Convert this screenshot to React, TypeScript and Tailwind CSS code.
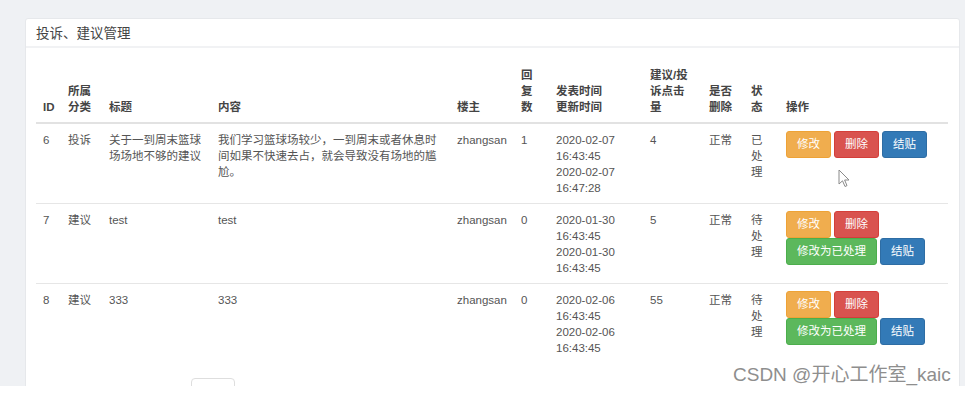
import React from 'react';

type Row = {
  id: string;
  type: string;
  title: string;
  content: string;
  owner: string;
  replies: string;
  dates: string[];
  clicks: string;
  deleted: string;
  status: string;
  done: boolean;
};

const rows: Row[] = [
  {
    id: '6',
    type: '投诉',
    title: '关于一到周末篮球场场地不够的建议',
    content: '我们学习篮球场较少，一到周末或者休息时间如果不快速去占，就会导致没有场地的尴尬。',
    owner: 'zhangsan',
    replies: '1',
    dates: ['2020-02-07', '16:43:45', '2020-02-07', '16:47:28'],
    clicks: '4',
    deleted: '正常',
    status: '已处理',
    done: true,
  },
  {
    id: '7',
    type: '建议',
    title: 'test',
    content: 'test',
    owner: 'zhangsan',
    replies: '0',
    dates: ['2020-01-30', '16:43:45', '2020-01-30', '16:43:45'],
    clicks: '5',
    deleted: '正常',
    status: '待处理',
    done: false,
  },
  {
    id: '8',
    type: '建议',
    title: '333',
    content: '333',
    owner: 'zhangsan',
    replies: '0',
    dates: ['2020-02-06', '16:43:45', '2020-02-06', '16:43:45'],
    clicks: '55',
    deleted: '正常',
    status: '待处理',
    done: false,
  },
];

const colWidths = [25, 41, 109, 239, 64, 35, 94, 59, 42, 35, 169];

function Btn({ color, children }: { color: 'orange' | 'red' | 'blue' | 'green'; children: React.ReactNode }) {
  const styles = {
    orange: 'bg-[#f0ad4e] border-[#eea236]',
    red: 'bg-[#d9534f] border-[#d43f3a]',
    blue: 'bg-[#337ab7] border-[#2e6da4]',
    green: 'bg-[#5cb85c] border-[#4cae4c]',
  };
  return (
    <span
      className={`inline-flex h-[27px] items-center justify-center rounded-[3px] border px-[10px] text-[11.5px] leading-none text-white ${styles[color]}`}
    >
      {children}
    </span>
  );
}

function Cursor() {
  return (
    <svg className="absolute left-[838px] top-[169px]" width="12" height="19" viewBox="0 0 12 19">
      <path
        d="M1 1 L1 15 L4.5 11.8 L7 17.5 L9 16.6 L6.6 11 L11 11 Z"
        fill="#fff"
        stroke="#8a8a8a"
        strokeWidth="1"
        strokeLinejoin="round"
      />
    </svg>
  );
}

export default function App() {
  const th = 'px-[7px] pt-[8px] pb-[7px] align-bottom text-left font-bold text-[#444] border-b-2 border-[#e2e2e2]';
  const td = 'px-[7px] pt-[8px] pb-[7px] align-top';

  return (
    <div
      className="relative h-[394px] w-[965px] overflow-hidden bg-white"
      style={{ fontFamily: '"Liberation Sans", "Noto Sans CJK SC", sans-serif' }}
    >
      <div className="h-[386px] overflow-hidden bg-[#eff1f4] pl-[25px] pr-[5px] pt-[18px]">
        <div className="h-[400px] rounded-[3px] border border-[#e6e8eb] bg-white">
          {/* panel heading */}
          <div className="flex h-[29px] items-center border-b-2 border-[#f1f2f4] px-[10px] pt-[3px] text-[13.5px] text-[#444]">
            投诉、建议管理
          </div>

          <div className="px-[10px] pt-[11px]">
            <table className="w-[912px] table-fixed border-collapse text-[11.5px] leading-[16px] text-[#555]">
              <colgroup>
                {colWidths.map((w, i) => (
                  <col key={i} style={{ width: w }} />
                ))}
              </colgroup>
              <thead>
                <tr>
                  <th className={th}>ID</th>
                  <th className={th}>所属分类</th>
                  <th className={th}>标题</th>
                  <th className={th}>内容</th>
                  <th className={th}>楼主</th>
                  <th className={th}>回复数</th>
                  <th className={th}>
                    发表时间
                    <br />
                    更新时间
                  </th>
                  <th className={th}>建议/投诉点击量</th>
                  <th className={th}>是否删除</th>
                  <th className={th}>状态</th>
                  <th className={th}>操作</th>
                </tr>
              </thead>
              <tbody>
                {rows.map((r, i) => (
                  <tr key={r.id} className={i > 0 ? 'border-t border-[#e6e6e6]' : ''}>
                    <td className={td}>{r.id}</td>
                    <td className={td}>{r.type}</td>
                    <td className={td}>{r.title}</td>
                    <td className={td}>{r.content}</td>
                    <td className={`${td} whitespace-nowrap`}>{r.owner}</td>
                    <td className={td}>{r.replies}</td>
                    <td className={td}>
                      {r.dates.map((d, j) => (
                        <div key={j}>{d}</div>
                      ))}
                    </td>
                    <td className={td}>{r.clicks}</td>
                    <td className={td}>{r.deleted}</td>
                    <td className={td}>{r.status}</td>
                    <td className={`${td} !pt-[7px]`}>
                      <div className="flex flex-wrap gap-x-[3px]">
                        <Btn color="orange">修改</Btn>
                        <Btn color="red">删除</Btn>
                        {!r.done && <Btn color="green">修改为已处理</Btn>}
                        <Btn color="blue">结贴</Btn>
                      </div>
                    </td>
                  </tr>
                ))}
              </tbody>
            </table>

            {/* pagination (cut off) */}
            <div className="ml-[155px] mt-[15px] flex h-[30px] w-[44px] items-start justify-center rounded-[4px] border border-[#dedede] pt-[6px] text-[11.5px] text-[#aaa]">
              上一页
            </div>
          </div>
        </div>
      </div>

      <Cursor />

      <div className="absolute left-[733px] top-[365px] text-[19px] leading-none text-[#8e8e8e]">
        CSDN @开心工作室_kaic
      </div>
    </div>
  );
}
